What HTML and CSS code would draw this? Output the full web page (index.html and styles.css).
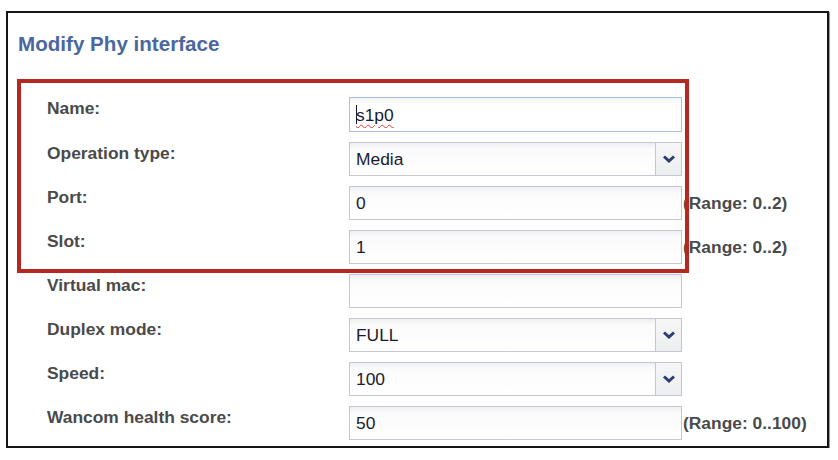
FILE: index.html
```html
<!DOCTYPE html>
<html>
<head>
<meta charset="utf-8">
<link rel="stylesheet" href="styles.css">
</head>
<body>
<div class="panel">
  <h1 class="title">Modify Phy interface</h1>
  <div class="form">
    <div class="label">Name:</div>
    <div class="field"><div class="input focused"><span class="caret"></span><span class="spell">s1p0</span></div></div>

    <div class="label">Operation type:</div>
    <div class="field"><div class="input select"><span class="val">Media</span><span class="btn"><svg width="14" height="10" viewBox="0 0 14 10"><polyline points="2,2.5 7,7 12,2.5" fill="none" stroke="#2c3d72" stroke-width="3"/></svg></span></div></div>

    <div class="label">Port:</div>
    <div class="field"><div class="input">0</div><span class="range">(Range: 0..2)</span></div>

    <div class="label">Slot:</div>
    <div class="field"><div class="input">1</div><span class="range">(Range: 0..2)</span></div>

    <div class="label">Virtual mac:</div>
    <div class="field"><div class="input"></div></div>

    <div class="label">Duplex mode:</div>
    <div class="field"><div class="input select"><span class="val">FULL</span><span class="btn"><svg width="14" height="10" viewBox="0 0 14 10"><polyline points="2,2.5 7,7 12,2.5" fill="none" stroke="#2c3d72" stroke-width="3"/></svg></span></div></div>

    <div class="label">Speed:</div>
    <div class="field"><div class="input select"><span class="val">100</span><span class="btn"><svg width="14" height="10" viewBox="0 0 14 10"><polyline points="2,2.5 7,7 12,2.5" fill="none" stroke="#2c3d72" stroke-width="3"/></svg></span></div></div>

    <div class="label">Wancom health score:</div>
    <div class="field"><div class="input">50</div><span class="range">(Range: 0..100)</span></div>
  </div>
  <div class="highlight"></div>
</div>
</body>
</html>
```

FILE: styles.css
```css
html, body {
  margin: 0;
  padding: 0;
  background: #ffffff;
}
body {
  font-family: "Liberation Sans", Arial, sans-serif;
}
.panel {
  position: relative;
  margin: 11px 0 0 6px;
  width: 823px;
  height: 437px;
  box-sizing: border-box;
  border: 2px solid #161616;
  box-shadow: 1px 1px 0 #9a9a9a;
  background: #fff;
}
.title {
  margin: 0;
  padding: 19px 0 0 10px;
  font-size: 20.6px;
  line-height: 24px;
  font-weight: bold;
  color: #4b679f;
}
.form {
  display: grid;
  grid-template-columns: 302px 1fr;
  row-gap: 10px;
  padding: 41px 0 0 39px;
}
.label {
  font-size: 17.4px;
  font-weight: bold;
  line-height: 20px;
  color: #4a4a4a;
  padding-top: 1px;
}
.field {
  display: flex;
  align-items: center;
  gap: 1px;
}
.input {
  box-sizing: border-box;
  width: 333px;
  height: 34px;
  border: 1px solid #c4c7cf;
  background: linear-gradient(#eeeff2 0, #fbfbfc 6px, #ffffff 100%);
  font-size: 17.4px;
  line-height: 32px;
  color: #1b1b2b;
  padding-left: 6px;
  display: flex;
  align-items: center;
}
.input.focused {
  border-color: #a7c1e2;
  height: 35px;
  background: linear-gradient(#f3f5f6 0, #ffffff 8px);
}
.caret {
  width: 1px;
  height: 19px;
  background: #1b1b2b;
  margin-right: -1px;
}
.spell {
  text-decoration: underline wavy #e03a3a;
  text-decoration-thickness: 1px;
  text-underline-offset: 3px;
}
.select {
  padding-right: 0;
}
.select .val {
  flex: 1;
}
.select .btn {
  width: 25px;
  align-self: stretch;
  border-left: 1px solid #c4c7cf;
  background: linear-gradient(#f6f6f7, #eceef0);
  display: flex;
  align-items: center;
  justify-content: center;
}
.select .btn svg {
  display: block;
  margin-top: -1px;
}
.range {
  font-size: 17.4px;
  font-weight: bold;
  color: #4a4a4a;
  line-height: 20px;
}
.highlight {
  position: absolute;
  left: 9px;
  top: 66px;
  width: 672px;
  height: 194px;
  box-sizing: border-box;
  border: 4px solid #b5271f;
  pointer-events: none;
}
```
